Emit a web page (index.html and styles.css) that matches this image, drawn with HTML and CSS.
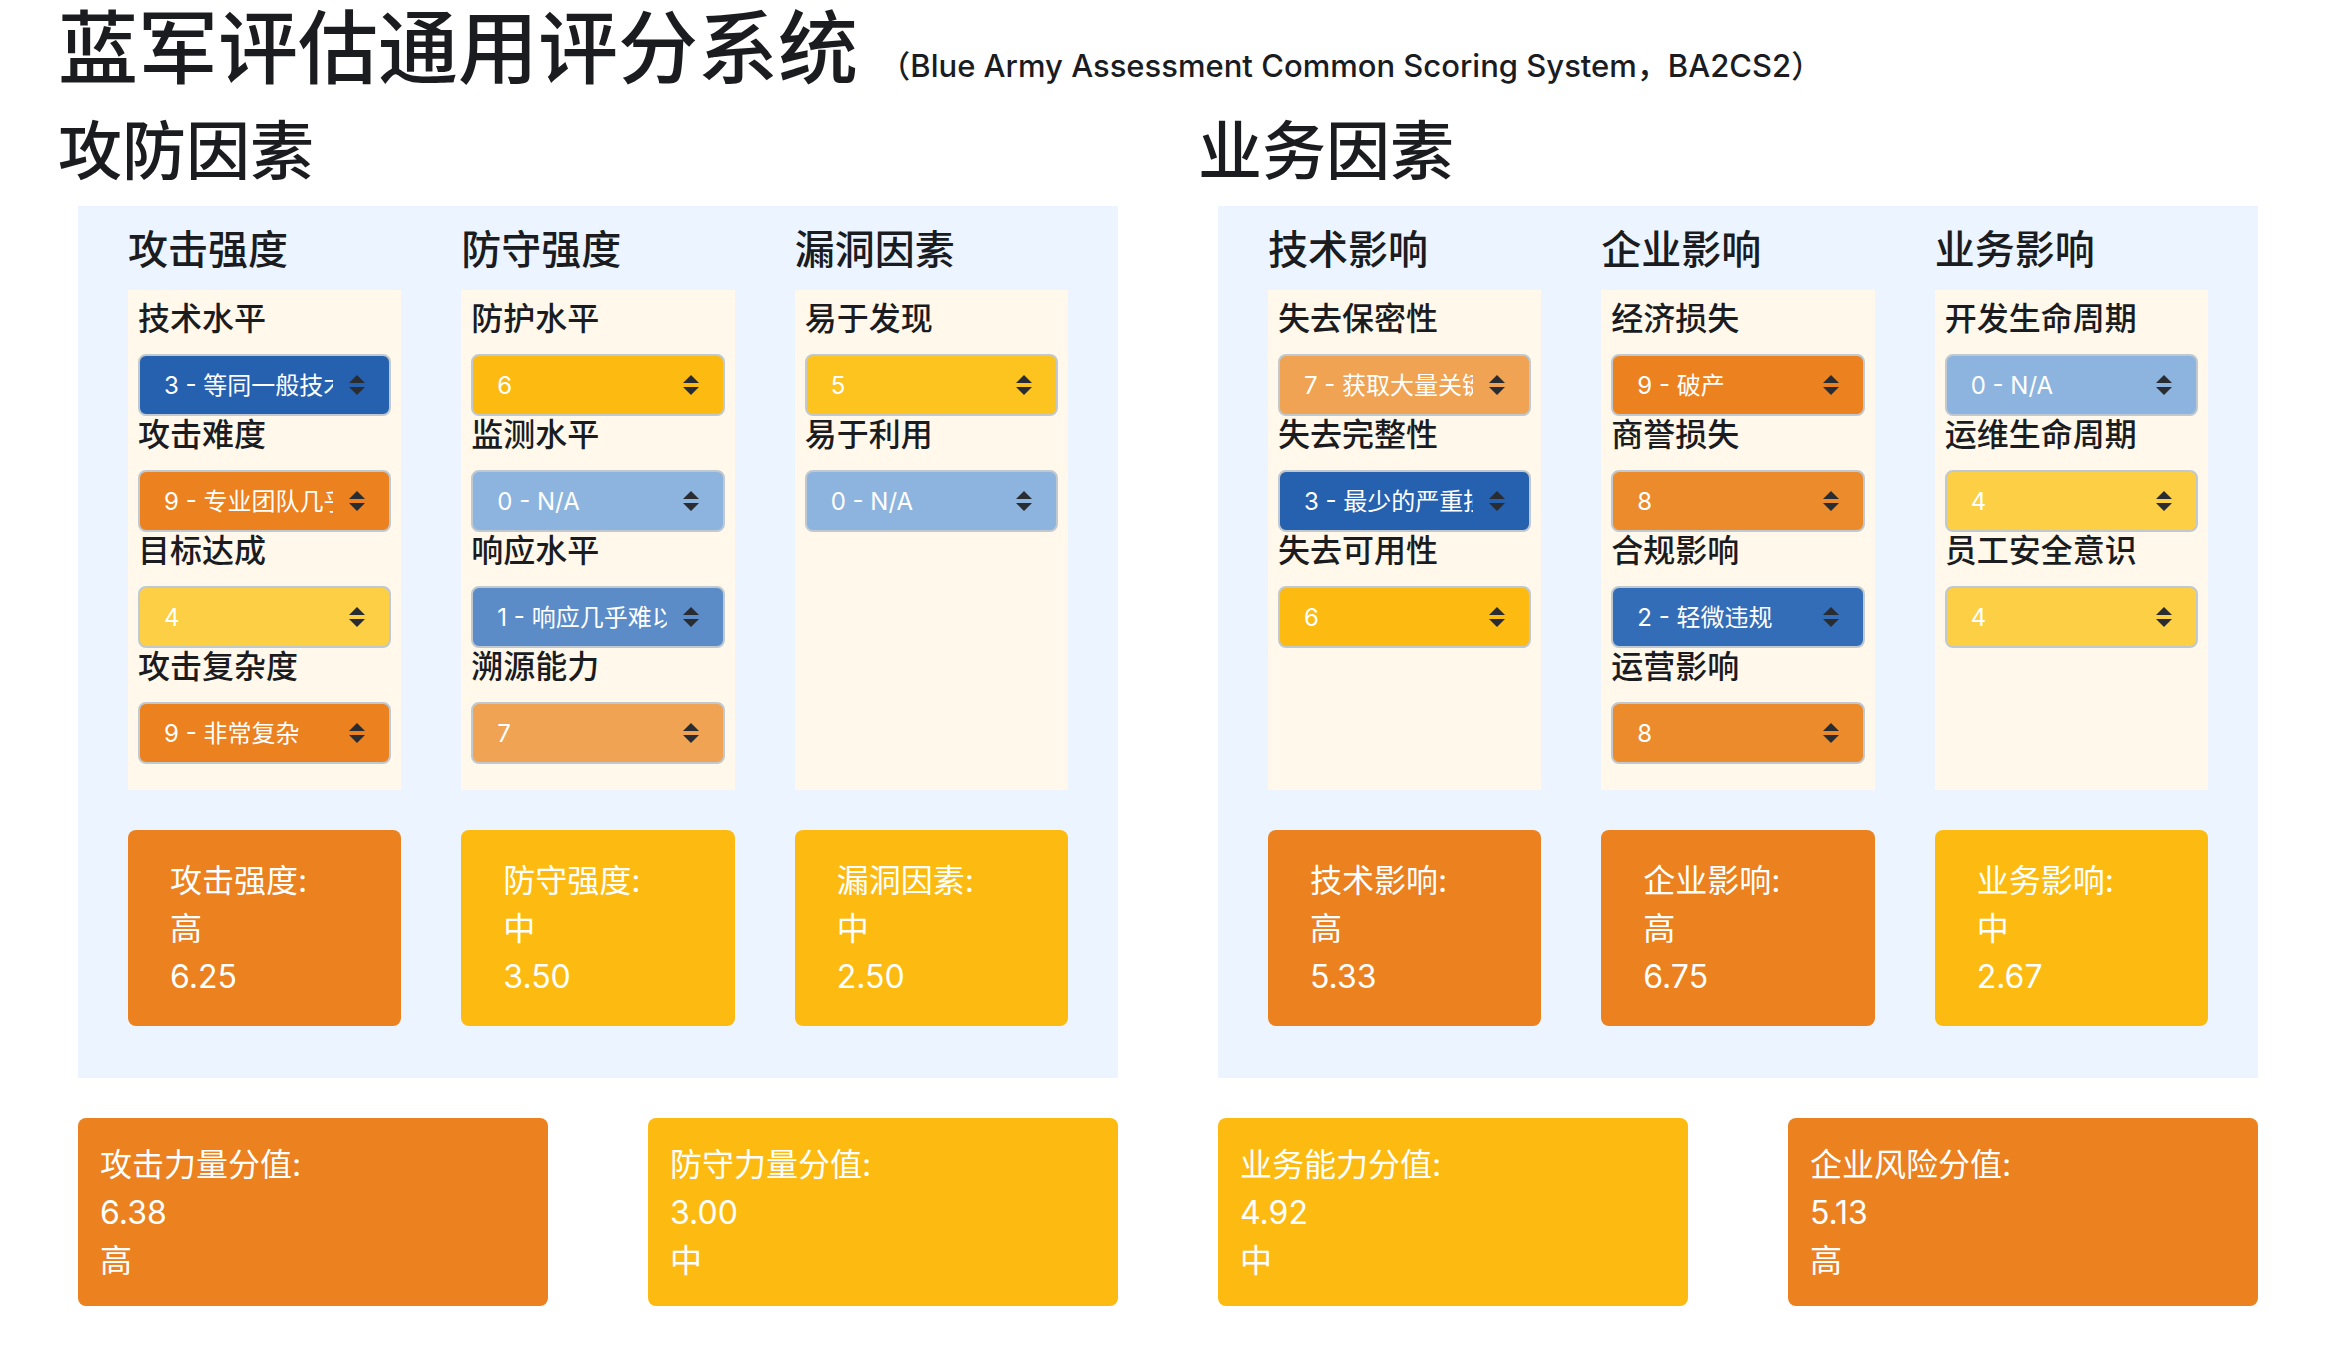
FILE: index.html
```html
<!DOCTYPE html>
<html lang="zh-CN">
<head>
<meta charset="utf-8">
<meta name="viewport" content="width=device-width, initial-scale=1">
<title>蓝军评估通用评分系统</title>
<link rel="stylesheet" href="styles.css">
</head>
<body>
<main class="page">
  <h1 class="title">蓝军评估通用评分系统 <small class="subtitle">（Blue Army Assessment Common Scoring System，BA2CS2）</small></h1>

  <div class="factors">
    <section class="factor">
      <h2 class="factor-title">攻防因素</h2>
      <div class="panel">
        <div class="group">
          <h3 class="group-title">攻击强度</h3>
          <div class="fields">
            <label class="field-label" for="skill">技术水平</label>
            <select class="field level-3" id="skill"><option>3 - 等同一般技术水平</option></select>
            <label class="field-label" for="difficulty">攻击难度</label>
            <select class="field level-9" id="difficulty"><option>9 - 专业团队几乎不能</option></select>
            <label class="field-label" for="goal">目标达成</label>
            <select class="field level-4" id="goal"><option>4</option></select>
            <label class="field-label" for="complexity">攻击复杂度</label>
            <select class="field level-9" id="complexity"><option>9 - 非常复杂</option></select>
          </div>
          <div class="score high">攻击强度:<br>高<br>6.25</div>
        </div>
        <div class="group">
          <h3 class="group-title">防守强度</h3>
          <div class="fields">
            <label class="field-label" for="protect">防护水平</label>
            <select class="field level-6" id="protect"><option>6</option></select>
            <label class="field-label" for="monitor">监测水平</label>
            <select class="field level-0" id="monitor"><option>0 - N/A</option></select>
            <label class="field-label" for="respond">响应水平</label>
            <select class="field level-1" id="respond"><option>1 - 响应几乎难以发现</option></select>
            <label class="field-label" for="trace">溯源能力</label>
            <select class="field level-7" id="trace"><option>7</option></select>
          </div>
          <div class="score medium">防守强度:<br>中<br>3.50</div>
        </div>
        <div class="group">
          <h3 class="group-title">漏洞因素</h3>
          <div class="fields">
            <label class="field-label" for="discover">易于发现</label>
            <select class="field level-5" id="discover"><option>5</option></select>
            <label class="field-label" for="exploit">易于利用</label>
            <select class="field level-0" id="exploit"><option>0 - N/A</option></select>
          </div>
          <div class="score medium">漏洞因素:<br>中<br>2.50</div>
        </div>
      </div>
    </section>

    <section class="factor">
      <h2 class="factor-title">业务因素</h2>
      <div class="panel">
        <div class="group">
          <h3 class="group-title">技术影响</h3>
          <div class="fields">
            <label class="field-label" for="confidentiality">失去保密性</label>
            <select class="field level-7" id="confidentiality"><option>7 - 获取大量关键数据</option></select>
            <label class="field-label" for="integrity">失去完整性</label>
            <select class="field level-3" id="integrity"><option>3 - 最少的严重损坏数据</option></select>
            <label class="field-label" for="availability">失去可用性</label>
            <select class="field level-6" id="availability"><option>6</option></select>
          </div>
          <div class="score high">技术影响:<br>高<br>5.33</div>
        </div>
        <div class="group">
          <h3 class="group-title">企业影响</h3>
          <div class="fields">
            <label class="field-label" for="finance">经济损失</label>
            <select class="field level-9" id="finance"><option>9 - 破产</option></select>
            <label class="field-label" for="reputation">商誉损失</label>
            <select class="field level-8" id="reputation"><option>8</option></select>
            <label class="field-label" for="compliance">合规影响</label>
            <select class="field level-2" id="compliance"><option>2 - 轻微违规</option></select>
            <label class="field-label" for="operation">运营影响</label>
            <select class="field level-8" id="operation"><option>8</option></select>
          </div>
          <div class="score high">企业影响:<br>高<br>6.75</div>
        </div>
        <div class="group">
          <h3 class="group-title">业务影响</h3>
          <div class="fields">
            <label class="field-label" for="dev">开发生命周期</label>
            <select class="field level-0" id="dev"><option>0 - N/A</option></select>
            <label class="field-label" for="ops">运维生命周期</label>
            <select class="field level-4" id="ops"><option>4</option></select>
            <label class="field-label" for="awareness">员工安全意识</label>
            <select class="field level-4" id="awareness"><option>4</option></select>
          </div>
          <div class="score medium">业务影响:<br>中<br>2.67</div>
        </div>
      </div>
    </section>
  </div>

  <div class="totals">
    <div class="total high">攻击力量分值:<br>6.38<br>高</div>
    <div class="total medium">防守力量分值:<br>3.00<br>中</div>
    <div class="total medium">业务能力分值:<br>4.92<br>中</div>
    <div class="total high">企业风险分值:<br>5.13<br>高</div>
  </div>
</main>
</body>
</html>
```
FILE: styles.css
```css
* {
  box-sizing: border-box;
}

body {
  margin: 0;
  background: #fff;
  color: #1a1c1f;
  font-family: Inter, "Noto Sans CJK SC", sans-serif;
  font-size: 32px;
  line-height: 48px;
}

h1,
h2,
h3 {
  margin: 0 0 16px;
  font-weight: 500;
}

.page {
  padding: 0 54px 40px 58px;
}

.title {
  font-size: 80px;
  line-height: 96px;
}

.subtitle {
  font-size: 31px;
  font-weight: 500;
  line-height: 1;
}

.factors {
  display: grid;
  grid-template-columns: 1fr 1fr;
  gap: 60px;
}

.factor-title {
  font-size: 64px;
  line-height: 78px;
}

.panel {
  display: grid;
  grid-template-columns: repeat(3, minmax(0, 1fr));
  gap: 60px;
  margin: 0 20px;
  padding: 20px 50px 52px;
  background: #ecf5ff;
}

.group-title {
  font-size: 40px;
  line-height: 48px;
}

.fields {
  min-height: 500px;
  margin-bottom: 40px;
  padding: 10px;
  background: #fff8eb;
}

.field-label {
  display: block;
  margin-bottom: 16px;
  font-weight: 500;
  line-height: 38px;
}

.field {
  display: block;
  width: 100%;
  height: 62px;
  padding: 0 56px 0 24px;
  border: 2px solid #c0c8d0;
  border-radius: 8px;
  appearance: none;
  color: #fff;
  font-family: inherit;
  font-size: 24px;
  background-image: url("data:image/svg+xml,%3Csvg xmlns='http://www.w3.org/2000/svg' viewBox='0 0 4 5'%3E%3Cpath fill='%23292d31' d='M2 0L0 2h4zm0 5L0 3h4z'/%3E%3C/svg%3E");
  background-position: right 24px center;
  background-repeat: no-repeat;
  background-size: 16px 20px;
}

.level-0 { background-color: #8cb4de; }
.level-1 { background-color: #5b8cc8; }
.level-2 { background-color: #346db7; }
.level-3 { background-color: #2661b0; }
.level-4 { background-color: #fdcf44; }
.level-5 { background-color: #fdc31f; }
.level-6 { background-color: #fdbb12; }
.level-7 { background-color: #efa353; }
.level-8 { background-color: #eb8b2c; }
.level-9 { background-color: #eb811f; }

.score,
.total {
  border-radius: 8px;
  color: #fff;
}

.score {
  padding: 27px 42px 25px;
}

.high { background: #eb811f; }
.medium { background: #fdbb12; }

.totals {
  display: grid;
  grid-template-columns: repeat(4, 1fr);
  gap: 100px;
  margin: 40px 20px 0;
}

.total {
  padding: 23px 22px 21px;
}
```
